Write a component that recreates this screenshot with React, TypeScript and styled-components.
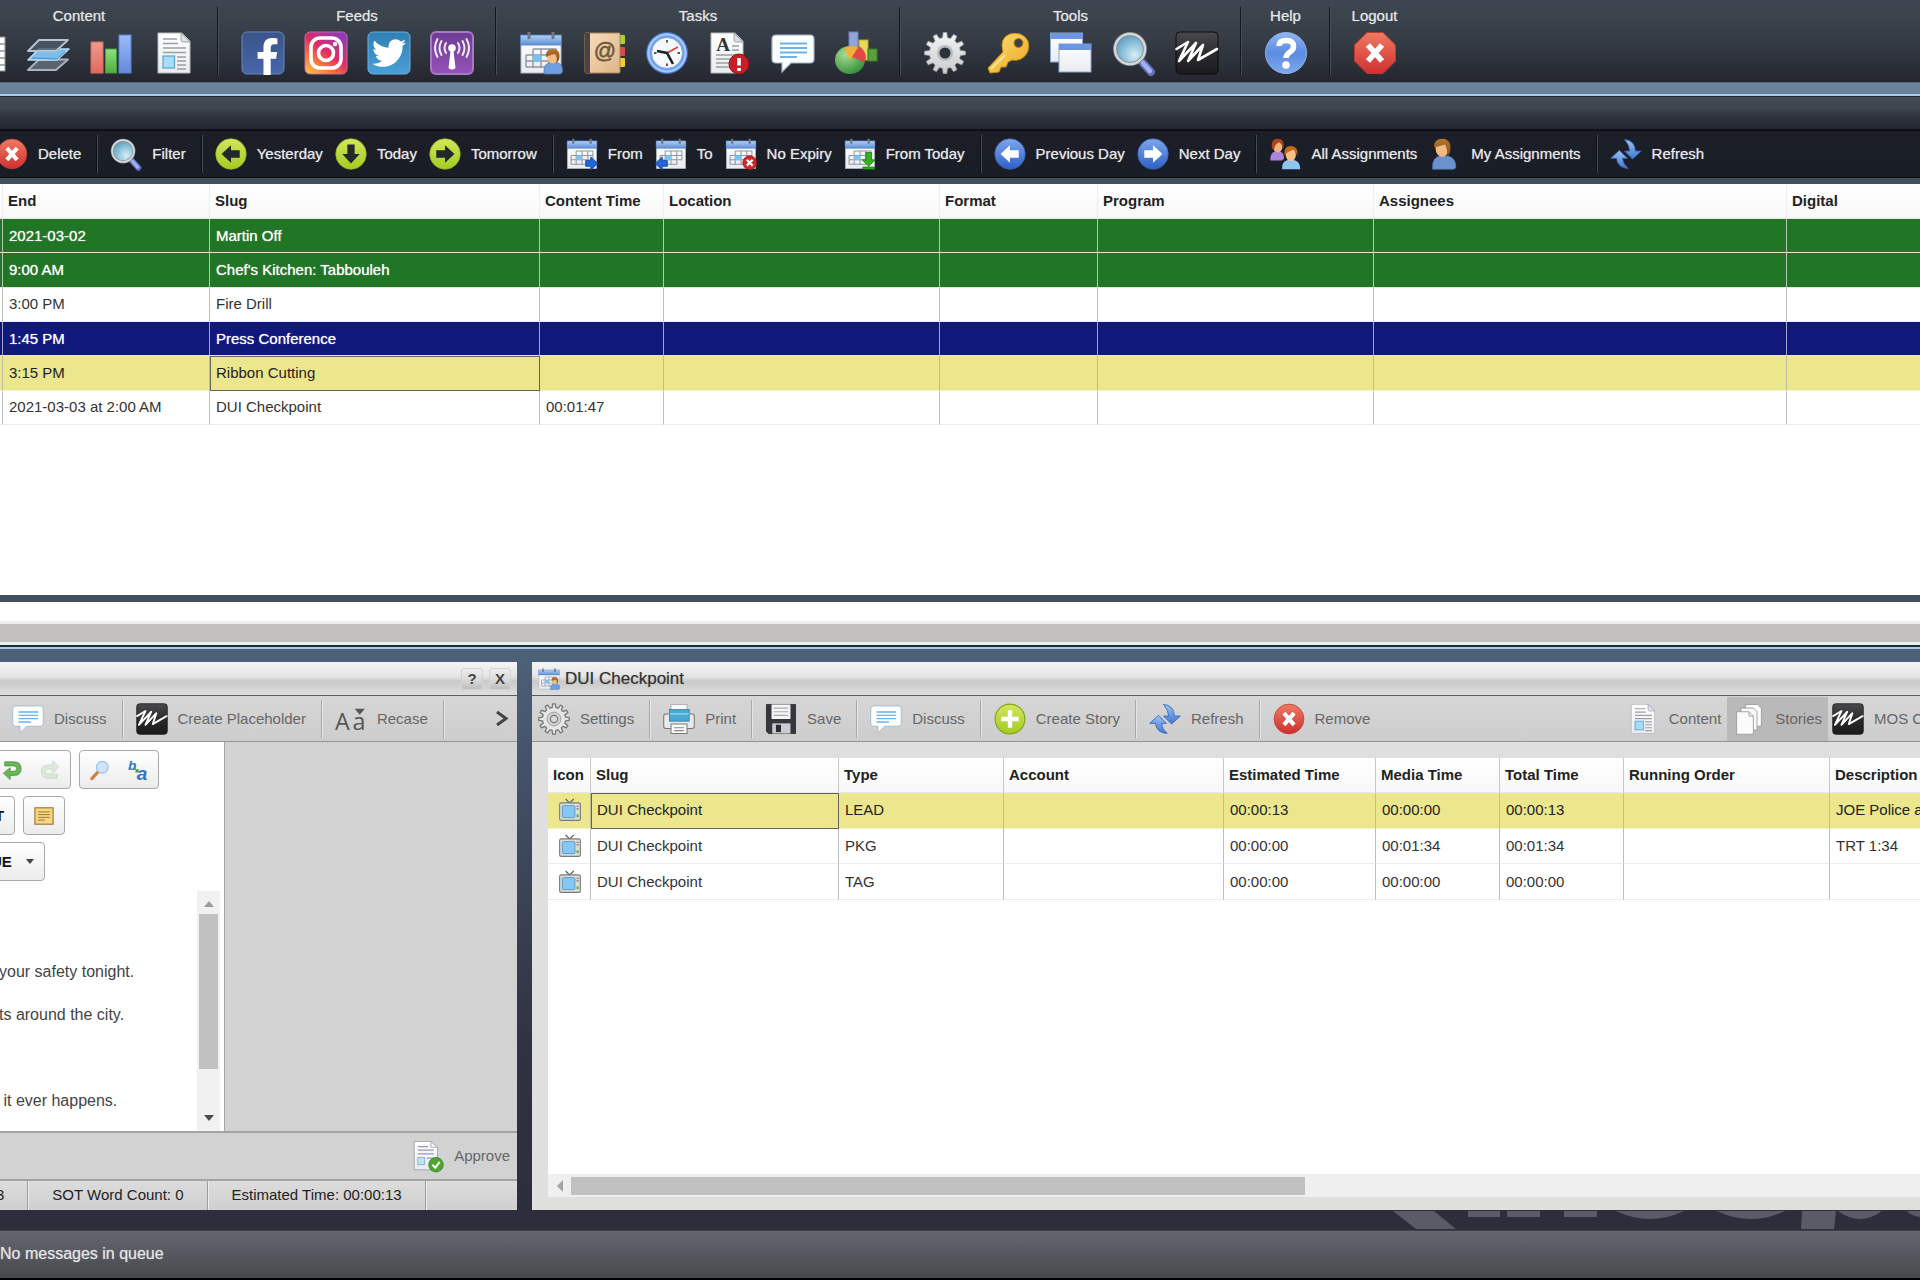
import React from 'react';
import styled, { createGlobalStyle, css } from 'styled-components';
import { FaFacebookF, FaTwitter } from 'react-icons/fa';

const GlobalStyle = createGlobalStyle`
  * { box-sizing: border-box; }
  html, body { margin: 0; padding: 0; }
  body {
    font-family: "Liberation Sans", Arial, sans-serif;
    font-size: 15px;
    line-height: 20px;
    color: #222;
    background: #2d2e3b;
  }
  button { font: inherit; color: inherit; background: none; border: 0; padding: 0; margin: 0; cursor: pointer; text-shadow: inherit; }
  svg { display: block; flex: none; overflow: visible; }
`;

/* ---------- icons ---------- */

const Defs = () => (
  <HiddenSvg width="0" height="0" aria-hidden="true">
    <defs>
      <linearGradient id="fb" x1="0" y1="0" x2="0" y2="1"><stop offset="0" stopColor="#3a5488" /><stop offset="1" stopColor="#4767ab" /></linearGradient>
      <linearGradient id="ig" x1="0.1" y1="1" x2="0.8" y2="0"><stop offset="0" stopColor="#fdc04f" /><stop offset="0.3" stopColor="#f8703c" /><stop offset="0.55" stopColor="#e02c66" /><stop offset="1" stopColor="#8b3ac0" /></linearGradient>
      <linearGradient id="tw" x1="0" y1="0" x2="0" y2="1"><stop offset="0" stopColor="#2f7fb4" /><stop offset="1" stopColor="#4a9fd6" /></linearGradient>
      <linearGradient id="pod" x1="0" y1="0" x2="0" y2="1"><stop offset="0" stopColor="#6d3c93" /><stop offset="1" stopColor="#9553b8" /></linearGradient>
      <linearGradient id="calTop" x1="0" y1="0" x2="0" y2="1"><stop offset="0" stopColor="#b5d0f5" /><stop offset="1" stopColor="#5c8fd8" /></linearGradient>
      <linearGradient id="paper" x1="0" y1="0" x2="0" y2="1"><stop offset="0" stopColor="#ffffff" /><stop offset="1" stopColor="#e9ebee" /></linearGradient>
      <linearGradient id="tan" x1="0" y1="0" x2="1" y2="1"><stop offset="0" stopColor="#f6dfc2" /><stop offset="1" stopColor="#dfb583" /></linearGradient>
      <linearGradient id="blueBall" x1="0" y1="0" x2="0" y2="1"><stop offset="0" stopColor="#7fa6ea" /><stop offset="0.5" stopColor="#5584dc" /><stop offset="1" stopColor="#2f5fc6" /></linearGradient>
      <linearGradient id="helpBall" x1="0" y1="0" x2="0" y2="1"><stop offset="0" stopColor="#92b6f3" /><stop offset="0.5" stopColor="#5c8be0" /><stop offset="1" stopColor="#7ea9ee" /></linearGradient>
      <linearGradient id="redBall" x1="0" y1="0" x2="0" y2="1"><stop offset="0" stopColor="#ee7b62" /><stop offset="1" stopColor="#d02f30" /></linearGradient>
      <linearGradient id="greenBall" x1="0" y1="0" x2="0" y2="1"><stop offset="0" stopColor="#d3e65c" /><stop offset="1" stopColor="#a3cc20" /></linearGradient>
      <radialGradient id="glass" cx="0.65" cy="0.7" r="0.8"><stop offset="0" stopColor="#d9eef5" /><stop offset="0.5" stopColor="#8cc0d8" /><stop offset="1" stopColor="#4f93b8" /></radialGradient>
      <linearGradient id="black" x1="0" y1="0" x2="0" y2="1"><stop offset="0" stopColor="#4a4a4c" /><stop offset="0.5" stopColor="#2c2c2e" /><stop offset="1" stopColor="#1b1b1d" /></linearGradient>
      <linearGradient id="gold" x1="0" y1="0" x2="1" y2="1"><stop offset="0" stopColor="#ffe27a" /><stop offset="1" stopColor="#e9a51d" /></linearGradient>
      <linearGradient id="steel" x1="0" y1="0" x2="0" y2="1"><stop offset="0" stopColor="#f3f4f5" /><stop offset="1" stopColor="#c9cbce" /></linearGradient>
      <linearGradient id="arrowBlue" x1="0" y1="0" x2="0" y2="1"><stop offset="0" stopColor="#9cc4f7" /><stop offset="1" stopColor="#3f76cf" /></linearGradient>
      <linearGradient id="hair" x1="0" y1="0" x2="0" y2="1"><stop offset="0" stopColor="#b5762d" /><stop offset="1" stopColor="#8a4d14" /></linearGradient>
      <linearGradient id="redBar" x1="0" y1="0" x2="0" y2="1"><stop offset="0" stopColor="#ef9b8f" /><stop offset="1" stopColor="#e2695f" /></linearGradient>
      <linearGradient id="greenBar" x1="0" y1="0" x2="0" y2="1"><stop offset="0" stopColor="#8fe07f" /><stop offset="1" stopColor="#4fae3c" /></linearGradient>
      <linearGradient id="blueBar" x1="0" y1="0" x2="0" y2="1"><stop offset="0" stopColor="#9cbcf5" /><stop offset="1" stopColor="#6488dc" /></linearGradient>
      <radialGradient id="pieGreen" cx="0.35" cy="0.3" r="0.8"><stop offset="0" stopColor="#a5dc93" /><stop offset="1" stopColor="#2d8a35" /></radialGradient>
    </defs>
  </HiddenSvg>
);

type IconFn = () => React.ReactElement;

const Sheet: IconFn = () => (
  <g>
    <rect x="2" y="6" width="40" height="34" fill="#fdfdfd" stroke="#8b8f96" />
    {[13, 20, 27, 34].map((y) => <path key={y} d={`M2 ${y}H42`} stroke="#8d9198" strokeWidth="1.4" />)}
    {[14, 28].map((x) => <path key={x} d={`M${x} 6V40`} stroke="#8d9198" strokeWidth="1.4" />)}
  </g>
);

const Layers: IconFn = () => (
  <g strokeLinejoin="round">
    <path d="M13 28.500H42L30 39H2z" fill="#59646f" stroke="#a9b4bf" strokeWidth="1.8" />
    <path d="M13 18H43L31 29H2z" fill="#7dbdec" stroke="#b7dcf8" strokeWidth="1.6" />
    <path d="M13 9H42L30 20H2z" fill="#4b5a68" fillOpacity="0.8" stroke="#b7c4cf" strokeWidth="1.8" />
    <path d="M6 27L31 28L39 21" stroke="#4a90cc" fill="none" />
  </g>
);

const Bars: IconFn = () => (
  <g>
    <rect x="2" y="11" width="12" height="31" fill="url(#redBar)" stroke="#d96a5f" />
    <rect x="16.500" y="18" width="11" height="24" fill="url(#greenBar)" stroke="#479a3a" />
    <rect x="30" y="4" width="12" height="38" fill="url(#blueBar)" stroke="#5f83d4" />
  </g>
);

const Doc: IconFn = () => (
  <g>
    <path d="M6 2H30L38 10V42H6z" fill="url(#paper)" stroke="#b7babd" />
    <path d="M29 2L38 11H31Q29 11 29 9z" fill="#dfe2e6" stroke="#8f9499" strokeWidth="0.8" />
    <path d="M11 8H25M11 12.500H26M11 17H34M11 21.500H34M25 26H34M25 30H34M25 34H34M25 38H34" stroke="#9b9ea3" strokeWidth="1.5" />
    <rect x="11" y="25" width="11.500" height="12" fill="#a9ddf6" stroke="#55a5d2" strokeWidth="1.2" />
  </g>
);

const Tile = ({ fill, stroke }: { fill: string; stroke: string }) => (
  <rect x="1" y="1" width="42" height="42" rx="5" fill={fill} stroke={stroke} />
);

const Facebook: IconFn = () => (
  <g>
    <Tile fill="url(#fb)" stroke="#6c86bd" />
    <FaFacebookF x={8} y={7} size={37} color="#fff" />
  </g>
);

const Instagram: IconFn = () => (
  <g>
    <Tile fill="url(#ig)" stroke="#c56a9c" />
    <rect x="7" y="7" width="30" height="30" rx="9" fill="none" stroke="#fff" strokeWidth="3.600" />
    <circle cx="22" cy="22" r="7.500" fill="none" stroke="#fff" strokeWidth="3.600" />
    <circle cx="31" cy="13" r="2.200" fill="#fff" />
  </g>
);

const Twitter: IconFn = () => (
  <g>
    <Tile fill="url(#tw)" stroke="#6db2df" />
    <FaTwitter x={5} y={5} size={34} color="#fff" />
  </g>
);

const Podcast: IconFn = () => (
  <g fill="none" stroke="#f4e9f8" strokeWidth="2" strokeLinecap="round">
    <Tile fill="url(#pod)" stroke="#a978c4" />
    <circle cx="22" cy="17" r="3.800" fill="#fff" stroke="none" />
    <path d="M20.500 20H23.500L25.500 37Q22 40 18.500 37z" fill="#fff" stroke="none" />
    <path d="M16 12Q13 17 16 22M28 12Q31 17 28 22M11.500 10Q7.500 17 11.500 24M32.500 10Q36.500 17 32.500 24M7.500 8Q2.500 17 7.500 26M36.500 8Q41.500 17 36.500 26" />
  </g>
);

const CalendarBase = () => (
  <g>
    <rect x="2" y="6" width="40" height="36" fill="url(#paper)" stroke="#b3b8c0" />
    <rect x="1.500" y="4" width="41" height="10" fill="url(#calTop)" stroke="#4f7cc4" strokeWidth="0.8" />
    <path d="M10 1V8M34 1V8" stroke="#6d7785" strokeWidth="3" />
    <path d="M7 24H37M7 30H37M7 36H30M14 18V37M22 18V37M30 18V37M14 18H37V31M7 24V36" stroke="#8e97a5" strokeWidth="1.4" fill="none" />
    <rect x="14.500" y="24" width="7.500" height="6.500" fill="#74c6f2" />
  </g>
);

const PersonBadge = () => (
  <g>
    <path d="M25 43Q24 31 34 31Q44 31 43.500 40Q43 43 40 43z" fill="#6f9fe0" stroke="#4c78bb" strokeWidth="0.8" />
    <ellipse cx="33.500" cy="26" rx="5.500" ry="6.500" fill="#f1bd86" />
    <path d="M27 26Q26 18 34 18Q41.500 18 40.500 27Q39.500 31 37.500 32Q38.500 26 36 23Q31 24 27 26z" fill="url(#hair)" />
  </g>
);

const CalendarPerson: IconFn = () => <g><CalendarBase /><PersonBadge /></g>;

const CalendarFrom: IconFn = () => (
  <g><CalendarBase /><path d="M27 31H34V26L44 35L34 44V39H27z" fill="#1f66d6" stroke="#0d3f9e" /></g>
);
const CalendarTo: IconFn = () => (
  <g><CalendarBase /><path d="M17 31H10V26L0 35L10 44V39H17z" fill="#1f66d6" stroke="#0d3f9e" /></g>
);
const CalendarNoExpiry: IconFn = () => (
  <g><CalendarBase /><circle cx="34" cy="34" r="9.500" fill="#d8232c" stroke="#9d0f16" /><path d="M30 30L38 38M38 30L30 38" stroke="#fff" strokeWidth="3" /></g>
);
const CalendarToday: IconFn = () => (
  <g><CalendarBase /><path d="M30 20H38V30H43L34 39L25 30H30zM26 40H42V43H26z" fill="#35b020" stroke="#16730d" /></g>
);

const AddressBook: IconFn = () => (
  <g>
    <rect x="34" y="4" width="9" height="9" rx="1" fill="#a6d431" />
    <rect x="34" y="16" width="9" height="9" rx="1" fill="#e0464c" />
    <rect x="34" y="27" width="9" height="9" rx="1" fill="#f2cd2e" />
    <rect x="3" y="2" width="35" height="40" rx="1" fill="url(#tan)" stroke="#a98456" />
    <rect x="3" y="2" width="5" height="40" fill="#4a4446" />
    <text x="23" y="27" textAnchor="middle" fontFamily="Liberation Sans, sans-serif" fontSize="22" fill="#72583b" stroke="#72583b" strokeWidth="0.6">@</text>
  </g>
);

const Clock: IconFn = () => (
  <g>
    <circle cx="22" cy="22" r="20.500" fill="#6f9fea" stroke="#3b6cc0" />
    <circle cx="22" cy="22" r="18.500" fill="none" stroke="#a7c8f8" strokeWidth="2" />
    <circle cx="22" cy="22" r="15.500" fill="#f5f8fc" stroke="#7ea3d8" />
    <path d="M22 9V11.500M22 32.500V35M9 22H11.500M32.500 22H35" stroke="#555" strokeWidth="2" />
    <path d="M22 22L33 16" stroke="#e23b3b" strokeWidth="1.6" />
    <path d="M12 20L22 22L28 33" stroke="#222" strokeWidth="2.600" fill="none" />
  </g>
);

const DocAlert: IconFn = () => (
  <g>
    <path d="M3 2H27L35 10V42H3z" fill="url(#paper)" stroke="#b7babd" />
    <path d="M26 2L35 11H28Q26 11 26 9z" fill="#d9dde2" stroke="#8f9499" strokeWidth="0.8" />
    <path d="M24 15H31M24 19H31M8 24H31M8 28H24M8 32H22M8 36H22" stroke="#9b9ea3" strokeWidth="1.500" />
    <text x="15" y="20" textAnchor="middle" fontFamily="Liberation Serif, serif" fontWeight="700" fontSize="19" fill="#333">A</text>
    <circle cx="31" cy="33" r="10" fill="#c81f26" stroke="#8d1016" />
    <path d="M31 27V34.500M31 37V40" stroke="#fff" strokeWidth="3.600" />
  </g>
);

const Chat: IconFn = () => (
  <g>
    <path d="M5 4H39Q43 4 43 8V28Q43 32 39 32H20L11 41V32H5Q1 32 1 28V8Q1 4 5 4z" fill="#fdfeff" stroke="#a5b6c9" strokeWidth="1.2" />
    <path d="M9 12.500H36M9 17H36M9 21.500H36M9 26H26" stroke="#6fb2e6" strokeWidth="2" />
  </g>
);

const PieChart: IconFn = () => (
  <g>
    <rect x="15" y="1" width="9" height="22" fill="#8fa5d8" stroke="#6d83b8" />
    <rect x="25" y="9" width="9" height="20" fill="#e6d95c" stroke="#b7a935" />
    <rect x="34" y="18" width="9" height="12" fill="#57a33a" stroke="#3c7c26" />
    <ellipse cx="16" cy="29" rx="15" ry="14" fill="url(#pieGreen)" />
    <path d="M16 29L10 17Q18 13 25 17z" fill="#f2b03a" />
    <path d="M18 26L25 15Q32 20 32 27Q31 30 30 31z" fill="#e0484a" />
  </g>
);

const gearPath = (teeth: number, outer: number, inner: number) => {
  const step = (Math.PI * 2) / teeth;
  const points: string[] = [];
  for (let i = 0; i < teeth; i += 1) {
    [[-0.3, inner], [-0.17, outer], [0.17, outer], [0.3, inner]].forEach(([offset, radius]) => {
      const angle = (i + offset) * step - Math.PI / 2;
      points.push(`${(22 + radius * Math.cos(angle)).toFixed(1)} ${(22 + radius * Math.sin(angle)).toFixed(1)}`);
    });
  }
  return `M${points.join('L')}z`;
};

const Gear: IconFn = () => (
  <g>
    <path d={gearPath(12, 20.5, 15.5)} fill="url(#steel)" stroke="#a7abb0" strokeWidth="0.8" />
    <circle cx="22" cy="22" r="8" fill="#b9bcc0" />
    <circle cx="22" cy="22" r="5.500" fill="#2c323b" />
  </g>
);

const GearLight: IconFn = () => (
  <g>
    <path d={gearPath(12, 21, 16)} fill="#e6e6e6" stroke="#777" strokeWidth="1.8" strokeLinejoin="round" />
    <circle cx="22" cy="22" r="9.500" fill="#d2d2d2" stroke="#9a9a9a" strokeWidth="1.2" />
    <circle cx="22" cy="22" r="5" fill="#d8d8d8" stroke="#777" strokeWidth="1.600" />
  </g>
);

const Key: IconFn = () => (
  <g>
    <path d="M2 37L17 21Q13 7 24 3Q36 0 42 10Q45 22 35 28Q30 30 26 29L22 31L20 36H15L13 41L4 42Z" fill="url(#gold)" stroke="#c98d12" />
    <circle cx="32.500" cy="12" r="4.500" fill="#3b3f45" stroke="#b98312" />
    <path d="M5 38L19 24" stroke="#fff0ab" strokeWidth="1.500" />
  </g>
);

const Windows: IconFn = () => (
  <g>
    <rect x="1.500" y="2" width="32" height="29" fill="url(#paper)" stroke="#8da4cf" />
    <rect x="1.500" y="2" width="32" height="6" fill="#6d96e2" />
    <rect x="10" y="13" width="32" height="28" fill="url(#paper)" stroke="#8da4cf" />
    <rect x="10" y="13" width="32" height="6" fill="#6d96e2" />
  </g>
);

const Magnifier: IconFn = () => (
  <g>
    <path d="M30 31L39 41" stroke="#5f6fb8" strokeWidth="8" strokeLinecap="round" />
    <path d="M31 32L38 40" stroke="#a3b2ee" strokeWidth="4.500" strokeLinecap="round" />
    <circle cx="18" cy="18" r="15" fill="url(#glass)" stroke="#7f858c" strokeWidth="4" />
    <circle cx="18" cy="18" r="15" fill="none" stroke="#d4d8db" strokeWidth="2.400" />
  </g>
);

const MosMark: IconFn = () => (
  <g>
    <rect x="1" y="1" width="42" height="42" rx="4" fill="url(#black)" stroke="#0d0d0e" />
    <path d="M1.500 18L13 11L4 30L21 12L13 30L28 14L23 29L42 18" fill="none" stroke="#fff" strokeWidth="2.600" strokeLinejoin="round" strokeLinecap="round" />
  </g>
);

const Help: IconFn = () => (
  <g>
    <circle cx="22" cy="22" r="20.500" fill="url(#helpBall)" stroke="#8db0ee" />
    <path d="M15 15Q15 9.500 22 9.500Q29.500 9.500 29.500 15.500Q29.500 19 26 21Q22 23.500 22 27" fill="none" stroke="#fff" strokeWidth="5.500" />
    <circle cx="22" cy="34" r="3.800" fill="#fff" />
  </g>
);

const Cross = () => <path d="M15 14L29 30M29 14L15 30" stroke="#fff" strokeWidth="5.600" />;

const Stop: IconFn = () => (
  <g>
    <path d="M14 1.500H30L42.500 14V30L30 42.500H14L1.500 30V14z" fill="url(#redBall)" stroke="#b93a31" />
    <Cross />
  </g>
);

const RedCross: IconFn = () => (
  <g>
    <circle cx="22" cy="22" r="20.500" fill="url(#redBall)" stroke="#b33a33" />
    <Cross />
  </g>
);

const ball = (fill: string, stroke: string, arrow: string, path: string): IconFn => () => (
  <g>
    <circle cx="22" cy="22" r="21" fill={fill} stroke={stroke} />
    <path d={path} fill={arrow} />
  </g>
);
const LEFT = 'M9 22L22 10V17H34V27H22V34z';
const RIGHT = 'M35 22L22 10V17H10V27H22V34z';
const DOWN = 'M22 35L10 22H17V9H27V22H34z';
const GreenLeft = ball('url(#greenBall)', '#8eb31b', '#23282d', LEFT);
const GreenDown = ball('url(#greenBall)', '#8eb31b', '#23282d', DOWN);
const GreenRight = ball('url(#greenBall)', '#8eb31b', '#23282d', RIGHT);
const BlueLeft = ball('url(#blueBall)', '#365fb8', '#fff', LEFT);
const BlueRight = ball('url(#blueBall)', '#365fb8', '#fff', RIGHT);

const Plus: IconFn = () => (
  <g>
    <circle cx="22" cy="22" r="20.500" fill="url(#greenBall)" stroke="#7fa31a" strokeWidth="1.600" />
    <path d="M22 10V34M10 22H34" stroke="#fff" strokeWidth="6" />
  </g>
);

const Users: IconFn = () => (
  <g>
    <path d="M2 31Q1 18 12 18Q20 18 21 28L18 31z" fill="#a884dc" />
    <ellipse cx="12" cy="12" rx="6.500" ry="8" fill="#f3b277" />
    <path d="M4 14Q2 1 12 1Q22 1 20 14Q18 8 14 6Q8 8 7 16z" fill="#a8431b" />
    <path d="M18 43Q17 30 30 30Q43 30 43 43z" fill="#8cc7f4" />
    <ellipse cx="30" cy="23" rx="7" ry="9" fill="#f6c184" />
    <path d="M21 24Q20 11 30 11Q41 11 39 26Q38 18 33 16Q26 18 21 24z" fill="#c56a17" />
  </g>
);

const User: IconFn = () => (
  <g>
    <path d="M5 43Q3 24 20 24Q37 24 37 40Q36 43 33 43z" fill="#6b92cf" stroke="#4a6ea8" />
    <ellipse cx="18" cy="14" rx="9" ry="12" fill="#efbb82" />
    <path d="M7 13Q6 1 19 1Q32 2 29 20Q27 24 25 25Q26 16 22 9Q14 11 7 13z" fill="url(#hair)" />
  </g>
);

const Refresh: IconFn = () => (
  <g fill="url(#arrowBlue)" stroke="#3564b4" strokeWidth="1.2" strokeLinejoin="round">
    <path d="M20 2Q34 3 35 18H43L31 29L20 18H27Q27 10 20 2z" />
    <path d="M25 42Q10 41 9 28H1L13 17L24 28H17Q18 36 25 42z" />
  </g>
);

const Printer: IconFn = () => (
  <g>
    <path d="M11 2H33V16H11z" fill="#fcfcfc" stroke="#999" />
    <path d="M4 15H40Q43 15 43 18V32Q43 35 40 35H4Q1 35 1 32V18Q1 15 4 15z" fill="#e8eaec" stroke="#777" strokeWidth="1.400" />
    <rect x="9" y="9" width="27" height="16" fill="#49a9d4" stroke="#23799f" />
    <path d="M9 15H36" stroke="#8ad2ee" strokeWidth="2" />
    <path d="M11 29H33V42H11z" fill="#fff" stroke="#777" strokeWidth="1.400" />
    <path d="M15 34H29M15 38H29" stroke="#888" strokeWidth="1.500" />
  </g>
);

const Floppy: IconFn = () => (
  <g>
    <path d="M2 2H42V42H5L2 39z" fill="#34373b" stroke="#1d1f21" />
    <rect x="9" y="2" width="26" height="20" fill="#f5f5f5" />
    <path d="M12 7H32M12 12H32M12 17H32" stroke="#aaa" strokeWidth="1.600" />
    <rect x="10" y="28" width="25" height="14" fill="#c9ccd0" />
    <rect x="15" y="30" width="7" height="10" fill="#2a2c2f" />
  </g>
);

const Papers: IconFn = () => (
  <g fill="#fbfbfb" stroke="#999" strokeWidth="1.200">
    <path d="M17 2H34L39 7V32H17z" />
    <path d="M11 7H28L33 12V37H11z" />
    <path d="M5 12H22L28 18V43H5z" />
    <path d="M22 12V18H28" fill="none" />
  </g>
);

const Recase: IconFn = () => (
  <g fill="#555" fontFamily="Open Sans, sans-serif">
    <text x="0" y="37" fontSize="32">A</text>
    <text x="24" y="37" fontSize="32">a</text>
    <path d="M27 8H41L34 16z" />
  </g>
);

const DocCheck: IconFn = () => (
  <g>
    <path d="M3 2H26L35 10V41H3z" fill="url(#paper)" stroke="#8f9499" />
    <path d="M26 2V10H35" fill="none" stroke="#8f9499" />
    <path d="M8 9H22M8 14H30M8 19H30M20 25H30" stroke="#9d93bd" strokeWidth="1.600" />
    <rect x="8" y="24" width="9" height="10" fill="#c0e2f5" stroke="#6aa8cf" />
    <circle cx="33" cy="34" r="10" fill="#4fa52f" stroke="#2d7d18" />
    <path d="M28 34L32 38L38 30" stroke="#fff" strokeWidth="2.800" fill="none" />
  </g>
);

const Tv: IconFn = () => (
  <g>
    <path d="M14 2L21 9L29 2" stroke="#666" strokeWidth="2.500" fill="none" />
    <rect x="3" y="9" width="38" height="32" rx="3" fill="#dcdcd8" stroke="#77797c" strokeWidth="2" />
    <rect x="8" y="14" width="23" height="22" rx="2" fill="#86c8f3" stroke="#4d8fc0" strokeWidth="1.500" />
    <path d="M34 15H38M34 20H38" stroke="#777" strokeWidth="2" />
    <rect x="34" y="30" width="4" height="5" fill="#5fae3e" />
  </g>
);

const Undo: IconFn = () => (
  <path d="M6 4H26Q42 4 42 19Q42 34 26 34H18V43L3 29L18 17V25H26Q32 25 32 19Q32 13 26 13H6z" fill="#6bb558" stroke="#3d8a35" strokeWidth="1.500" />
);
const Redo: IconFn = () => (
  <g opacity="0.35"><path d="M38 40H18Q3 40 3 25Q3 11 18 11H28V2L42 15L28 28V20H18Q12 20 12 25.500Q12 31 18 31H38z" fill="#b4d0b1" stroke="#6f946c" strokeWidth="1.500" /></g>
);
const Find: IconFn = () => (
  <g>
    <path d="M4 41L17 27" stroke="#cf7f45" strokeWidth="7" strokeLinecap="round" />
    <circle cx="27" cy="16" r="13" fill="#cfe4fa" stroke="#9dbfe8" strokeWidth="2.500" />
  </g>
);
const Replace: IconFn = () => (
  <g fontFamily="Liberation Sans, sans-serif" fontWeight="700" fontStyle="italic" fill="#2f74cf">
    <text x="0" y="21" fontSize="30">b</text>
    <text x="19" y="44" fontSize="42">a</text>
    <path d="M13 17L22 26M22 20V26H16" stroke="#3f9a3c" strokeWidth="3" fill="none" />
  </g>
);
const Note: IconFn = () => (
  <g>
    <rect x="2" y="4" width="40" height="36" fill="#f7d984" stroke="#9a7327" strokeWidth="2.500" />
    <path d="M9 13H35M9 19H35M9 25H35M9 31H24" stroke="#a07a31" strokeWidth="2.200" />
  </g>
);

const Icon = ({ of: Draw, size = 32 }: { of: IconFn; size?: number }) => (
  <svg width={size} height={size} viewBox="0 0 44 44" aria-hidden="true"><Draw /></svg>
);

/* ---------- page ---------- */

const HiddenSvg = styled.svg`position: absolute;`;

const Page = styled.div`
  height: 100vh;
  display: flex;
  flex-direction: column;
  overflow: hidden;
  background: linear-gradient(#6a829c 0, #4c6078 50%, #34384a 85%, #2d2e3b 95%);
  border-bottom: 2px solid #000;
`;

const Ribbon = styled.header`
  flex: none;
  display: flex;
  height: 82px;
  padding-top: 7px;
  margin-left: -60px;
  background: linear-gradient(#3e4751, #363d47 45%, #24272f);
`;
const RibbonGroup = styled.section`
  flex: none;
  height: 68px;
  padding: 0 12px 0 13px;
  border-right: 1px solid #14171c;
  box-shadow: 1px 0 0 #464d57;
  &:last-child { border: 0; box-shadow: none; }
`;
const RibbonLabel = styled.h2`
  margin: 0 0 6px;
  font-size: 15px;
  font-weight: 400;
  line-height: 17px;
  text-align: center;
  color: #e4e6e8;
  text-shadow: 0 0 1px #a9abae;
`;
const RibbonRow = styled.div`display: flex;`;
const RibbonButton = styled.button`
  width: 63px;
  height: 46px;
  display: grid;
  place-items: center;
`;

const Band = styled.div`
  flex: none;
  height: 15px;
  background: #6a829c;
  border-top: 1px solid #52657a;
  border-bottom: 1px solid #20262e;
  box-shadow: inset 0 -2px 0 #a9cbef;
`;
const WindowTitle = styled.div`
  flex: none;
  height: 34px;
  background: linear-gradient(#434b55, #3d444e 35%, #2c323b 65%, #23272f);
  border-bottom: 2px solid #0d0f13;
`;

const barBase = css`
  flex: none;
  display: flex;
  align-items: center;
  white-space: nowrap;
  overflow: hidden;
`;
const DarkBar = styled.div`
  ${barBase}
  height: 47px;
  color: #e6e8ea;
  text-shadow: 0 0 1px #a9abae;
  background: linear-gradient(#1c1f27, #191d25);
  border-bottom: 1px solid #0c0e12;
`;
const LightBar = styled.div`
  ${barBase}
  height: 46px;
  color: #666;
  background: linear-gradient(#d6d6d6, #cdcdcd);
  border-bottom: 1px solid #949494;
`;
const ToolButton = styled.button<{ $active?: boolean }>`
  flex: none;
  height: 44px;
  padding: 0 6px;
  display: flex;
  align-items: center;
  gap: 10px;
  background: ${(p) => (p.$active ? '#b9b9b9' : 'transparent')};
`;
const Separator = styled.span<{ $light?: boolean }>`
  flex: none;
  width: 2px;
  height: 38px;
  margin: 0 6px 0 9px;
  background: ${(p) => (p.$light ? '#a9a9a9' : '#0d0f13')};
  border-right: 1px solid ${(p) => (p.$light ? '#e6e6e6' : '#464a52')};
`;
const Spacer = styled.span`flex: 1;`;
const EdgeButton = styled(ToolButton)`
  width: 92px;
  padding: 0 0 0 4px;
  overflow: hidden;
`;

const Strip = styled.div<{ $height: number }>`
  flex: none;
  height: ${(p) => p.$height}px;
  background: #434f5c;
`;

/* ---------- tables ---------- */

const GridPane = styled.main`
  flex: 411 1 0;
  min-height: 0;
  overflow: hidden;
  background: #fff;
`;
const Grid = styled.table<{ $height: number }>`
  width: 100%;
  height: ${(p) => p.$height}px;
  table-layout: fixed;
  border-collapse: separate;
  border-spacing: 0;
  background: #fff;
`;
const Head = styled.th<{ $line: string }>`
  height: 35px;
  padding: 0 0 0 5px;
  text-align: left;
  font-weight: 700;
  white-space: nowrap;
  color: #222;
  background: linear-gradient(#fff, #f8f8f8);
  border-right: 1px solid ${(p) => p.$line};
  border-bottom: 1px solid #e6e9e6;
  &:last-child { border-right: 0; }
`;
type Tone = 'green' | 'navy' | 'khaki' | 'plain';
const tones: Record<Tone, { bg: string; fg: string; side: string; line: string; glow: string }> = {
  green: { bg: '#217626', fg: '#fff', side: '#b3c9b4', line: '#dbe8db', glow: '0 0 1px #c8dcc9' },
  navy: { bg: '#10187c', fg: '#fff', side: '#a3a6c6', line: '#e4e4ee', glow: '0 0 1px #c4c6e0' },
  khaki: { bg: '#ece68c', fg: '#222', side: '#bfbca0', line: '#f3f0c4', glow: 'none' },
  plain: { bg: '#fff', fg: '#333', side: '#bdbdbd', line: '#ececec', glow: 'none' },
};
const Cell = styled.td<{ $tone: Tone; $focus?: boolean }>`
  padding: 0 0 0 6px;
  overflow: hidden;
  white-space: nowrap;
  color: ${(p) => tones[p.$tone].fg};
  text-shadow: ${(p) => tones[p.$tone].glow};
  background: ${(p) => tones[p.$tone].bg};
  border-right: 1px solid ${(p) => tones[p.$tone].side};
  border-bottom: 1px solid ${(p) => tones[p.$tone].line};
  &:last-child { border-right: 0; }
  ${(p) => p.$focus && css`outline: 1px solid #66645a; outline-offset: -1px;`}
`;

/* ---------- lower area ---------- */

const ScrollGap = styled.div`
  flex: none;
  height: 19px;
  background: #fff;
`;
const ScrollTrack = styled.div`
  flex: none;
  height: 24px;
  padding: 3px 0;
  background: #eeeeee;
`;
const WideThumb = styled.div`
  height: 18px;
  background: #c1c0be;
`;
const Sill = styled.div`
  flex: none;
  height: 17px;
  background: #4c6078;
  border-top: 2px solid #1f2b3c;
  box-shadow: inset 0 2px 0 #a9c9e8;
`;
const Panels = styled.div`
  flex: 548 1 0;
  min-height: 0;
  display: flex;
  gap: 15px;
  background: linear-gradient(#4c6078, #3f4a60 30%, #2f3242 70%, #2d2e3b);
`;
const Panel = styled.section<{ $grow: number }>`
  flex: ${(p) => p.$grow} 1 0;
  min-width: 0;
  display: flex;
  flex-direction: column;
  background: #d2d2d2;
`;
const PanelTitle = styled.div`
  flex: none;
  height: 34px;
  padding: 0 6px;
  display: flex;
  align-items: center;
  gap: 5px;
  background: linear-gradient(#f5f5f5, #e4e4e4 45%, #c9c9c9 58%, #dedede);
  border-bottom: 1px solid #5d5d5d;
`;
const TitleText = styled.h2`
  margin: 0;
  font-size: 17px;
  font-weight: 400;
  line-height: 20px;
  color: #333;
  text-shadow: 0 0 1px #888;
`;
const TitleButton = styled.button`
  width: 22px;
  height: 22px;
  margin-left: 1px;
  font-size: 15px;
  font-weight: 700;
  color: #444;
  border: 1px solid #d3d3d3;
  border-radius: 3px;
  background: linear-gradient(#ececec, #dcdcdc 50%, #bdbdbd);
`;
const More = styled.button`
  width: 32px;
  height: 40px;
  display: grid;
  place-items: center;
`;

const EditorBody = styled.div`
  flex: 1;
  min-height: 0;
  display: flex;
`;
const Editor = styled.div`
  width: 225px;
  display: flex;
  flex-direction: column;
  background: #fff;
  border-right: 1px solid #a5a5a5;
`;
const EditorTools = styled.div`
  display: flex;
  flex-direction: column;
  gap: 7px;
  padding: 8px 0 10px;
`;
const EditorRow = styled.div`
  display: flex;
  gap: 8px;
`;
const ButtonGroup = styled.div<{ $bleed?: number }>`
  height: 39px;
  padding: 0 10px;
  margin-left: -${(p) => p.$bleed ?? 0}px;
  display: flex;
  align-items: center;
  gap: 18px;
  border: 1px solid #a9a9a9;
  border-radius: 4px;
  background: linear-gradient(#fff, #ececec);
`;
const SquareButton = styled.button`
  display: flex;
  align-items: center;
  gap: 14px;
  font-weight: 700;
  color: #111;
`;
const EditorScroll = styled.div`
  flex: 1;
  min-height: 0;
  display: flex;
  overflow: hidden;
`;
const Script = styled.div`
  flex: 1;
  min-width: 0;
  padding-top: 60px;
  white-space: nowrap;
  font-size: 16px;
  color: #444;
`;
const Line = styled.p`
  height: 43px;
  margin: 0 0 0 -1px;
  line-height: 42px;
`;
const VTrack = styled.div`
  width: 23px;
  margin-right: 4px;
  padding: 8px 2px;
  display: flex;
  flex-direction: column;
  align-items: center;
  gap: 6px;
  background: #f1f1f1;
`;
const VThumb = styled.div`
  flex: 160 1 0;
  align-self: stretch;
  background: #c1c1c1;
`;
const VRest = styled.div`flex: 34 1 0;`;

const ApproveBar = styled.div`
  flex: none;
  height: 48px;
  display: flex;
  align-items: center;
  justify-content: flex-end;
  padding-right: 1px;
  color: #666;
  border-top: 2px solid #a3a3a3;
`;
const StatusBar = styled.footer`
  flex: none;
  height: 31px;
  display: flex;
  border-top: 2px solid #a3a3a3;
  background: linear-gradient(#dcdcdc, #cfcfcf);
`;
const StatusItem = styled.span<{ $first?: boolean }>`
  padding: ${(p) => (p.$first ? '0 23px 0 0' : '0 23px 0 24px')};
  margin-left: ${(p) => (p.$first ? '-4px' : '0')};
  line-height: 28px;
  color: #222;
  border-right: 1px solid #9c9c9c;
  box-shadow: 1px 0 0 #ececec;
`;

const StoriesBody = styled.div`
  flex: 1;
  min-height: 0;
  padding: 16px 0 13px 16px;
  display: flex;
  flex-direction: column;
  background: #dfdfdd;
`;
const StoriesGrid = styled.div`
  flex: 1;
  overflow: hidden;
  background: #fff;
`;
const HTrack = styled.div`
  flex: none;
  height: 23px;
  padding: 3px 0;
  display: flex;
  align-items: center;
  background: #efefef;
`;
const HArrow = styled.button`
  width: 23px;
  display: grid;
  place-items: center;
`;
const HThumb = styled.div`
  flex: 734 1 0;
  height: 18px;
  background: #c1c1c1;
`;
const HRest = styled.div`flex: 615 1 0;`;
const TvSlot = styled.span`
  display: flex;
  padding-left: 4px;
`;

const LogoStrip = styled.div`
  flex: none;
  height: 20px;
  display: flex;
  justify-content: flex-end;
  background: #2d2e3b;
`;
const MessageBar = styled.footer`
  flex: none;
  height: 48px;
  font-size: 16px;
  line-height: 45px;
  color: #e4e4e6;
  text-shadow: 0 0 1px #b4b4b8;
  background: linear-gradient(#666671, #55585e 50%, #48494d);
  border-top: 1px solid #3c3d49;
`;

/* ---------- data ---------- */

const ribbon: { label: string; items: [string, IconFn][] }[] = [
  { label: 'Content', items: [['Rundowns', Sheet], ['Layers', Layers], ['Statistics', Bars], ['Stories', Doc]] },
  { label: 'Feeds', items: [['Facebook', Facebook], ['Instagram', Instagram], ['Twitter', Twitter], ['Podcasts', Podcast]] },
  { label: 'Tasks', items: [['Assignments', CalendarPerson], ['Contacts', AddressBook], ['Schedule', Clock], ['Alerts', DocAlert], ['Messages', Chat], ['Reports', PieChart]] },
  { label: 'Tools', items: [['Settings', Gear], ['Permissions', Key], ['Windows', Windows], ['Search', Magnifier], ['MOS', MosMark]] },
  { label: 'Help', items: [['Help', Help]] },
  { label: 'Logout', items: [['Logout', Stop]] },
];

type Tool = [string, IconFn] | null;
const scheduleTools: Tool[] = [
  null, ['Filter', Magnifier], null,
  ['Yesterday', GreenLeft], ['Today', GreenDown], ['Tomorrow', GreenRight], null,
  ['From', CalendarFrom], ['To', CalendarTo], ['No Expiry', CalendarNoExpiry], ['From Today', CalendarToday], null,
  ['Previous Day', BlueLeft], ['Next Day', BlueRight], null,
  ['All Assignments', Users], ['My Assignments', User], null,
  ['Refresh', Refresh],
];
const storyTools: Tool[] = [
  ['Settings', GearLight], null, ['Print', Printer], null, ['Save', Floppy], null, ['Discuss', Chat], null,
  ['Create Story', Plus], null, ['Refresh', Refresh], null, ['Remove', RedCross],
];
const editorTools: Tool[] = [
  ['Discuss', Chat], null, ['Create Placeholder', MosMark], null, ['Recase', Recase], null,
];

const Tools = ({ items, light }: { items: Tool[]; light?: boolean }) => (
  <>
    {items.map((item, i) =>
      item ? (
        <ToolButton key={i} type="button"><Icon of={item[1]} />{item[0]}</ToolButton>
      ) : (
        <Separator key={i} $light={light} />
      ),
    )}
  </>
);

const scheduleColumns: [string, number | undefined][] = [
  ['', 3], ['End', 207], ['Slug', 330], ['Content Time', 124], ['Location', 276], ['Format', 158],
  ['Program', 276], ['Assignees', 413], ['Digital', undefined],
];
const scheduleRows: { tone: Tone; end: string; slug: string; time?: string; focus?: boolean }[] = [
  { tone: 'green', end: '2021-03-02', slug: 'Martin Off' },
  { tone: 'green', end: '9:00 AM', slug: "Chef's Kitchen: Tabbouleh" },
  { tone: 'plain', end: '3:00 PM', slug: 'Fire Drill' },
  { tone: 'navy', end: '1:45 PM', slug: 'Press Conference' },
  { tone: 'khaki', end: '3:15 PM', slug: 'Ribbon Cutting', focus: true },
  { tone: 'plain', end: '2021-03-03 at 2:00 AM', slug: 'DUI Checkpoint', time: '00:01:47' },
];

const storyColumns: [string, number | undefined][] = [
  ['Icon', 43], ['Slug', 248], ['Type', 165], ['Account', 220], ['Estimated Time', 152], ['Media Time', 124],
  ['Total Time', 124], ['Running Order', 206], ['Description', undefined],
];
const storyRows: string[][] = [
  ['DUI Checkpoint', 'LEAD', '', '00:00:13', '00:00:00', '00:00:13', '', 'JOE Police a'],
  ['DUI Checkpoint', 'PKG', '', '00:00:00', '00:01:34', '00:01:34', '', 'TRT 1:34'],
  ['DUI Checkpoint', 'TAG', '', '00:00:00', '00:00:00', '00:00:00', '', ''],
];

const GridHead = ({ columns, line }: { columns: [string, number | undefined][]; line: string }) => (
  <>
    <colgroup>{columns.map(([name, width]) => <col key={name} width={width} />)}</colgroup>
    <thead><tr>{columns.map(([name]) => <Head key={name} $line={line}>{name}</Head>)}</tr></thead>
  </>
);

const ScheduleTable = () => (
  <Grid $height={241}>
    <GridHead columns={scheduleColumns} line="#efefef" />
    <tbody>
      {scheduleRows.map((row) => (
        <tr key={row.slug}>
          {['', row.end, row.slug, row.time ?? '', '', '', '', '', ''].map((text, i) => (
            <Cell key={i} $tone={row.tone} $focus={row.focus && i === 2}>{text}</Cell>
          ))}
        </tr>
      ))}
    </tbody>
  </Grid>
);

const StoriesTable = () => (
  <Grid $height={142}>
    <GridHead columns={storyColumns} line="#c9c9c9" />
    <tbody>
      {storyRows.map((row, r) => {
        const tone: Tone = r === 0 ? 'khaki' : 'plain';
        return (
          <tr key={row[1]}>
            <Cell $tone={tone}><TvSlot><Icon of={Tv} size={24} /></TvSlot></Cell>
            {row.map((text, i) => <Cell key={i} $tone={tone} $focus={r === 0 && i === 0}>{text}</Cell>)}
          </tr>
        );
      })}
    </tbody>
  </Grid>
);

const DeleteButton = styled(ToolButton)`
  margin-left: -10px;
`;
const EditorToolList = styled.div`
  display: flex;
  align-items: center;
  padding-left: 6px;
`;

const App = () => (
  <Page>
    <GlobalStyle />
    <Defs />
    <Ribbon>
      {ribbon.map((group) => (
        <RibbonGroup key={group.label}>
          <RibbonLabel>{group.label}</RibbonLabel>
          <RibbonRow>
            {group.items.map(([name, draw]) => (
              <RibbonButton key={name} type="button" aria-label={name}><Icon of={draw} size={44} /></RibbonButton>
            ))}
          </RibbonRow>
        </RibbonGroup>
      ))}
    </Ribbon>
    <Band />
    <WindowTitle />
    <DarkBar>
      <DeleteButton type="button"><Icon of={RedCross} />Delete</DeleteButton>
      <Tools items={scheduleTools} />
    </DarkBar>
    <Strip $height={6} />
    <GridPane><ScheduleTable /></GridPane>
    <Strip $height={7} />
    <ScrollGap />
    <ScrollTrack><WideThumb /></ScrollTrack>
    <Sill />
    <Panels>
      <Panel $grow={517}>
        <PanelTitle>
          <Spacer />
          <TitleButton type="button">?</TitleButton>
          <TitleButton type="button">X</TitleButton>
        </PanelTitle>
        <LightBar>
          <EditorToolList><Tools items={editorTools} light /></EditorToolList>
          <Spacer />
          <More type="button" aria-label="More tools">
            <svg width="14" height="18" viewBox="0 0 14 18"><path d="M3 2L12 8.500L3 15" fill="none" stroke="#444" strokeWidth="3" /></svg>
          </More>
        </LightBar>
        <EditorBody>
          <Editor>
            <EditorTools>
              <EditorRow>
                <ButtonGroup $bleed={9}>
                  <SquareButton type="button" aria-label="Undo"><Icon of={Undo} size={20} /></SquareButton>
                  <SquareButton type="button" aria-label="Redo"><Icon of={Redo} size={20} /></SquareButton>
                </ButtonGroup>
                <ButtonGroup>
                  <SquareButton type="button" aria-label="Find"><Icon of={Find} size={20} /></SquareButton>
                  <SquareButton type="button" aria-label="Replace"><Icon of={Replace} size={20} /></SquareButton>
                </ButtonGroup>
              </EditorRow>
              <EditorRow>
                <ButtonGroup $bleed={16}><SquareButton type="button">T</SquareButton></ButtonGroup>
                <ButtonGroup><SquareButton type="button" aria-label="Note"><Icon of={Note} size={20} /></SquareButton></ButtonGroup>
              </EditorRow>
              <EditorRow>
                <ButtonGroup $bleed={20}>
                  <SquareButton type="button">UE<svg width="8" height="5" viewBox="0 0 8 5"><path d="M0 0H8L4 5z" fill="#444" /></svg></SquareButton>
                </ButtonGroup>
              </EditorRow>
            </EditorTools>
            <EditorScroll>
              <Script>
                <Line>your safety tonight.</Line>
                <Line>ts around the city.</Line>
                <Line />
                <Line>&nbsp;it ever happens.</Line>
              </Script>
              <VTrack>
                <svg width="10" height="9" viewBox="0 0 10 9"><path d="M0 8H10L5 2z" fill="#9c9c9c" /></svg>
                <VThumb />
                <VRest />
                <svg width="10" height="9" viewBox="0 0 10 9"><path d="M0 1H10L5 7z" fill="#4c4c4c" /></svg>
              </VTrack>
            </EditorScroll>
          </Editor>
        </EditorBody>
        <ApproveBar><ToolButton type="button"><Icon of={DocCheck} />Approve</ToolButton></ApproveBar>
        <StatusBar>
          <StatusItem $first>3</StatusItem>
          <StatusItem>SOT Word Count: 0</StatusItem>
          <StatusItem>Estimated Time: 00:00:13</StatusItem>
        </StatusBar>
      </Panel>
      <Panel $grow={1388}>
        <PanelTitle>
          <Icon of={CalendarPerson} size={22} />
          <TitleText>DUI Checkpoint</TitleText>
        </PanelTitle>
        <LightBar>
          <Tools items={storyTools} light />
          <Spacer />
          <ToolButton type="button"><Icon of={Doc} />Content</ToolButton>
          <ToolButton type="button" $active><Icon of={Papers} />Stories</ToolButton>
          <EdgeButton type="button"><Icon of={MosMark} />MOS C</EdgeButton>
        </LightBar>
        <StoriesBody>
          <StoriesGrid><StoriesTable /></StoriesGrid>
          <HTrack>
            <HArrow type="button" aria-label="Scroll left">
              <svg width="8" height="12" viewBox="0 0 8 12"><path d="M7 0V12L1 6z" fill="#a3a3a3" /></svg>
            </HArrow>
            <HThumb />
            <HRest />
          </HTrack>
        </StoriesBody>
      </Panel>
    </Panels>
    <LogoStrip>
      <svg width="540" height="20" viewBox="1380 0 540 20" aria-hidden="true">
        <g fill="#5b5b68">
          <path d="M1393 1H1434L1456 19H1416z" />
          <path d="M1468 1H1500V7H1468zM1507 1H1540V7H1507zM1564 1H1597V7H1564z" />
          <path d="M1616 1H1684Q1650 17 1616 1zM1717 1H1785Q1750 17 1717 1zM1838 1H1882Q1860 17 1838 1z" />
          <path d="M1802 1H1836L1834 19H1801zM1907 1H1920V7Q1911 6 1907 1z" />
        </g>
      </svg>
    </LogoStrip>
    <MessageBar>No messages in queue</MessageBar>
  </Page>
);

export default App;
